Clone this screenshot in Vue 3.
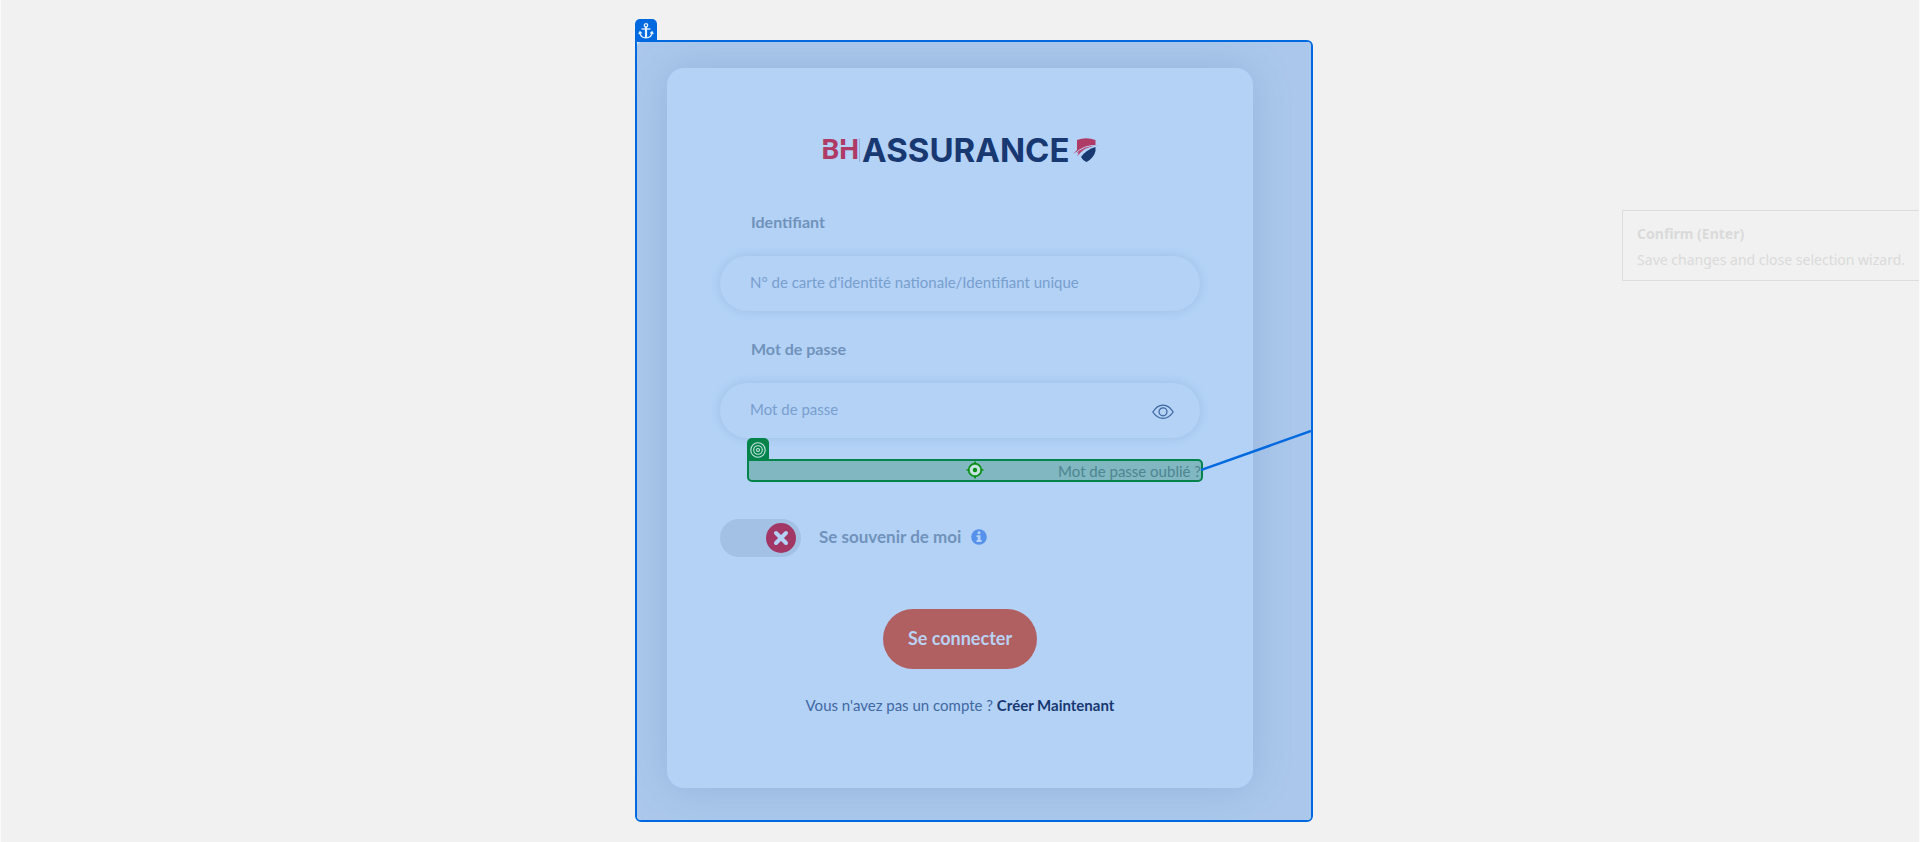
<script setup>
import { ref } from 'vue'

const identifier = ref('')
const password = ref('')
const showPassword = ref(false)
const remember = ref(false)
</script>

<template>
  <main class="page">
    <section class="anchor-frame">
      <span class="tab anchor-tab">
        <svg viewBox="0 0 16 18" width="16" height="18" fill="none" stroke="#e8f2ff" stroke-width="1.3">
          <circle cx="8" cy="3.3" r="1.7" />
          <path d="M3.5 7h9" />
          <path d="M8 5v11" stroke-width="2.2" />
          <path d="M1.8 10.3c.4 3.6 2.6 5.6 6.2 5.6s5.800-2 6.200-5.600M.8 12l1.200-2.300 1.800 1.700M15.200 12l-1.200-2.300-1.800 1.700" />
        </svg>
      </span>
      <div class="surface">
        <form class="card" @submit.prevent>
          <div class="logo">
            <span class="logo-bh">BH</span>
            <span class="logo-name">ASSURANCE</span>
            <svg class="shield" viewBox="0 0 26 24" width="26" height="24">
              <path d="M4 2Q13-1.500 22.500 2V7Q11 8 4 15Z" fill="#ae3a65" />
              <path d="M22.500 9V13Q21 20 13.500 24Q9.500 22.500 8 19Q13.500 11.500 22.500 9Z" fill="#183872" />
              <path d="M0 16Q9 5 25.500 7.500Q12 8 4 18.500Q8 10.500 0 16Z" fill="#b8426c" />
              <path d="M1 16.500Q11 6.500 24 7.600M4.500 18.500Q12 9.500 24 8" fill="none" stroke="#b3d2f6" stroke-width="1" />
            </svg>
          </div>

          <label class="field-label" for="identifier">Identifiant</label>
          <input id="identifier" v-model="identifier" class="field" type="text"
            placeholder="N° de carte d'identité nationale/Identifiant unique">

          <label class="field-label second" for="password">Mot de passe</label>
          <div class="password">
            <input id="password" v-model="password" class="field" :type="showPassword ? 'text' : 'password'"
              placeholder="Mot de passe">
            <button class="eye" type="button" aria-label="Afficher le mot de passe" @click="showPassword = !showPassword">
              <svg viewBox="0 0 22 16" width="22" height="16" fill="none" stroke="#3c64a0" stroke-width="1.2">
                <path d="M.8 8Q5 1.200 11 1.200T21.200 8Q17 14.400 11 14.400T.8 8Z" />
                <circle cx="11" cy="7.800" r="4" />
              </svg>
            </button>
          </div>

          <div class="target">
            <span class="tab target-tab">
              <svg viewBox="0 0 16 16" width="16" height="16" fill="none" stroke="#c5e6e4" stroke-width="1.1">
                <circle cx="8" cy="8" r="7.200" />
                <circle cx="8" cy="8" r="4.300" />
                <circle cx="8" cy="8" r="1.500" />
              </svg>
            </span>
            <svg class="crosshair" viewBox="0 0 18 18" width="18" height="18">
              <circle cx="9" cy="9" r="6.300" fill="#c5e2e0" stroke="#089014" stroke-width="1.700" />
              <circle cx="9" cy="9" r="2.200" fill="#089014" />
              <path d="M9 .5v3M9 14.500v3M.5 9h3M14.500 9h3" stroke="#089014" stroke-width="1.700" />
            </svg>
            <a class="forgot" href="#">Mot de passe oublié ?</a>
            <svg class="connector" viewBox="0 0 110 41" width="110" height="41">
              <path d="M0 40L110 1" stroke="#0069e0" stroke-width="2.500" />
            </svg>
          </div>

          <div class="remember">
            <label class="switch">
              <input v-model="remember" type="checkbox" aria-label="Se souvenir de moi">
              <span class="knob">
                <svg viewBox="0 0 16 16" width="16" height="16" stroke="#b3d2f6" stroke-width="4" stroke-linecap="round">
                  <path d="M3 3l10 10M13 3L3 13" />
                </svg>
              </span>
            </label>
            <span class="remember-text">Se souvenir de moi</span>
            <svg class="info" viewBox="0 0 16 16" width="16" height="16">
              <circle cx="8" cy="8" r="7.800" fill="#5692eb" />
              <circle cx="8" cy="3.700" r="1.500" fill="#b3d2f6" />
              <path d="M5.500 6.300h4v4.800h1.200v1.800H5.500v-1.800h1.200V8.100H5.500z" fill="#b3d2f6" />
            </svg>
          </div>

          <button class="submit" type="submit">Se connecter</button>
          <p class="signup">Vous n'avez pas un compte ? <a href="#">Créer Maintenant</a></p>
        </form>
      </div>
    </section>

    <aside class="hint">
      <strong>Confirm (Enter)</strong>
      <span>Save changes and close selection wizard.</span>
    </aside>
  </main>
</template>

<style>
body {
  margin: 0;
  background: #f1f1f1;
}
</style>

<style scoped>
* {
  box-sizing: border-box;
}

.page {
  position: relative;
  display: flex;
  justify-content: center;
  align-items: flex-start;
  min-height: 100vh;
  padding: 40px 0 20px 28px;
  border: solid #fafafa;
  border-width: 0 1px;
  overflow: hidden;
  font-family: Lato, "Liberation Sans", sans-serif;
  background: #f1f1f1;
}

.anchor-frame {
  position: relative;
  width: 100%;
  max-width: 678px;
  border: 2px solid #0069e0;
  border-radius: 6px;
  border-top-left-radius: 0;
}

.surface {
  padding: 26px 58px 32px 30px;
  background: #abc8ec;
  border-radius: 4px;
  overflow: hidden;
}

.tab {
  position: absolute;
  display: flex;
  align-items: center;
  justify-content: center;
  width: 22px;
  height: 23px;
  border-radius: 5px 5px 0 0;
}

.anchor-tab {
  left: -2px;
  bottom: 100%;
  background: #0069e0;
}

.card {
  display: flex;
  flex-direction: column;
  padding: 70px 53px;
  background: #b3d2f6;
  border-radius: 17px;
  box-shadow: 0 0 40px rgba(60, 95, 150, 0.2);
}

.logo {
  display: flex;
  align-items: center;
  justify-content: center;
  height: 24px;
  font: 700 33px/24px Inter, Lato, sans-serif;
}

.logo-bh {
  position: relative;
  margin-right: 2px;
  border-right: 1px solid #96b0dc;
  font-family: Roboto, sans-serif;
  font-size: 28px;
  color: #ae3a65;
}

.logo-bh::after {
  content: "";
  position: absolute;
  left: 0;
  top: 7px;
  width: 26px;
  height: 2px;
  background: linear-gradient(90deg, #b3d2f6 7px, transparent 7px, transparent 19px, #b3d2f6 19px);
}

.logo-name {
  color: #183872;
}

.shield {
  margin-left: 3px;
}

.field-label {
  align-self: flex-start;
  margin: 48px 0 22px 31px;
  font-size: 16px;
  font-weight: 700;
  line-height: 24px;
  color: #7092bc;
}

.field-label.second {
  margin-top: 26px;
}

.field {
  display: block;
  width: 100%;
  height: 55px;
  padding: 0 60px 3px 30px;
  border: 0;
  border-radius: 28px;
  outline: 0;
  background: #b3d2f6;
  box-shadow: 0 0 10px rgba(70, 110, 165, 0.2);
  font: 400 15px Lato, sans-serif;
  color: #3c64a0;
}

.field::placeholder {
  color: #789fce;
  opacity: 1;
}

.password {
  position: relative;
}

.eye {
  position: absolute;
  right: 26px;
  top: 21px;
  width: 22px;
  height: 16px;
  padding: 0;
  border: 0;
  background: none;
}

.eye svg {
  display: block;
}

.target {
  position: relative;
  display: flex;
  align-items: center;
  justify-content: flex-end;
  height: 23px;
  margin: 21px -3px 0 27px;
  border: 2px solid #04834a;
  border-radius: 0 5px 5px 5px;
  background: #80b7c0;
}

.target-tab {
  left: -2px;
  bottom: 100%;
  background: #04834a;
}

.crosshair {
  position: absolute;
  left: calc(50% - 9px);
  top: 0;
}

.forgot {
  font-size: 15px;
  line-height: 20px;
  color: #4d8590;
  text-decoration: none;
}

.connector {
  position: absolute;
  left: 100%;
  bottom: 9px;
}

.remember {
  display: flex;
  align-items: center;
  margin-top: 37px;
}

.switch {
  display: flex;
  align-items: center;
  justify-content: flex-end;
  width: 81px;
  height: 38px;
  padding: 0 5px;
  border-radius: 19px;
  background: #a3c0e5;
}

.switch input {
  position: absolute;
  opacity: 0;
}

.switch:has(input:checked) {
  justify-content: flex-start;
}

.knob {
  display: flex;
  align-items: center;
  justify-content: center;
  width: 30px;
  height: 30px;
  border-radius: 50%;
  background: #a23765;
}

.remember-text {
  margin-left: 18px;
  padding-bottom: 2px;
  font-size: 17px;
  font-weight: 700;
  line-height: 24px;
  color: #7092bc;
}

.info {
  margin: 0 0 2px 10px;
}

.submit {
  align-self: center;
  height: 60px;
  margin-top: 52px;
  padding: 0 25px 2px;
  border: 0;
  border-radius: 30px;
  background: #b16062;
  font: 700 18px Lato, sans-serif;
  color: #b9d2f4;
}

.signup {
  margin: 24px 0 0;
  padding-bottom: 1px;
  font-size: 15px;
  line-height: 24px;
  text-align: center;
  color: #4168a3;
}

.signup a {
  font-weight: 700;
  color: #183872;
  text-decoration: none;
}

.hint {
  position: absolute;
  top: 210px;
  right: -1px;
  display: flex;
  flex-direction: column;
  padding: 10px 14px 7px;
  border: 1px solid #dcdcdc;
  font: 14px/26px "Noto Sans", "Open Sans", sans-serif;
  color: #dadada;
}
</style>
